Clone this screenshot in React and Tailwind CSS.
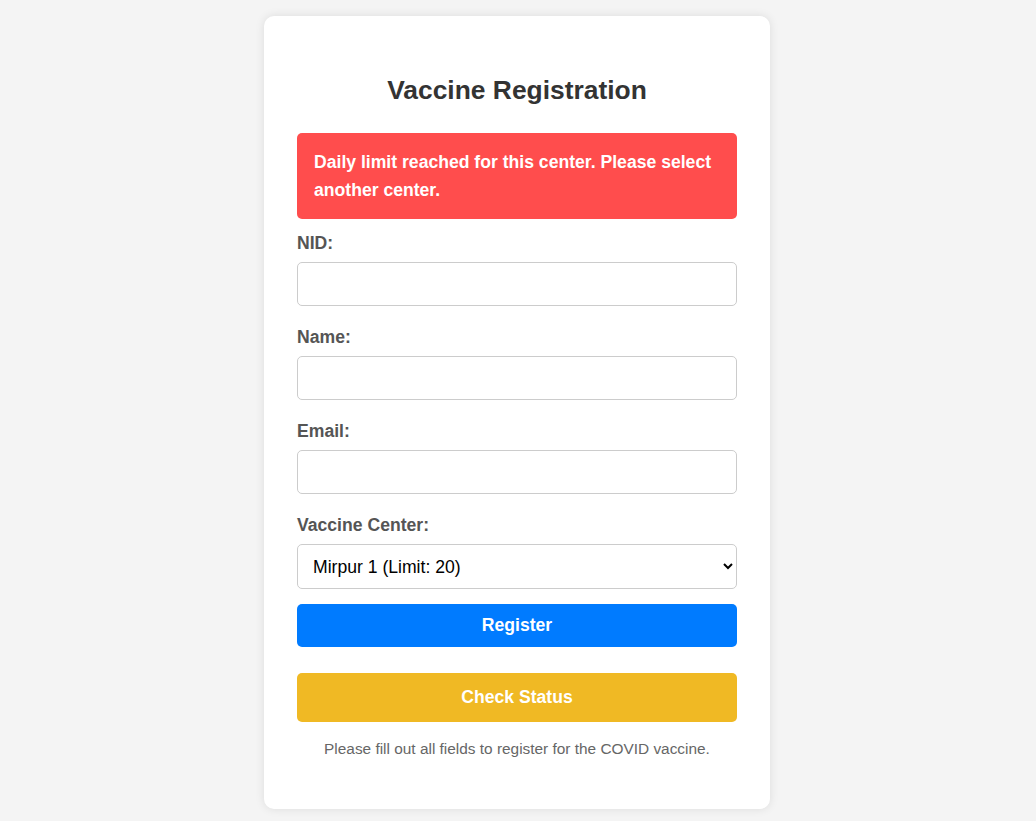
import { useState } from "react";

const centers = [
  { id: 1, name: "Mirpur 1", limit: 20 },
  { id: 2, name: "Mirpur 10", limit: 30 },
  { id: 3, name: "Dhanmondi", limit: 25 },
];

const Field = ({ label, name, type = "text", value, onChange }) => (
  <div>
    <label htmlFor={name} className="block text-[17.6px] leading-[20px] font-bold text-[#555] mb-[9px]">
      {label}
    </label>
    <input
      id={name}
      name={name}
      type={type}
      value={value}
      onChange={onChange}
      className="block w-full h-[44px] px-[11px] mb-[21px] border border-[#ccc] rounded-[5px] bg-white text-[17.6px] text-black focus:outline-none"
    />
  </div>
);

export default function App() {
  const [form, setForm] = useState({ nid: "", name: "", email: "", center: "1" });

  const handleChange = (e) => {
    const { name, value } = e.target;
    setForm((prev) => ({ ...prev, [name]: value }));
  };

  return (
    <div className="min-h-[821px] bg-[#f4f4f4] pt-4 font-['Liberation_Sans',Arial,sans-serif]">
      <div className="mx-auto -translate-x-px w-[506px] bg-white rounded-[10px] shadow-[0_0_10px_rgba(0,0,0,0.1)] px-[33px] pt-[59px] pb-[51px]">
        {/* Title */}
        <h2 className="text-center text-[26.4px] leading-[30px] font-bold text-[#333] mb-[28px]">
          Vaccine Registration
        </h2>

        {/* Error */}
        <div className="bg-[#ff4d4d] text-white font-bold text-[17.6px] leading-[28px] rounded-[5px] px-[17px] py-[15px] mb-[14px]">
          Daily limit reached for this center. Please select another center.
        </div>

        {/* Form */}
        <Field label="NID:" name="nid" value={form.nid} onChange={handleChange} />
        <Field label="Name:" name="name" value={form.name} onChange={handleChange} />
        <Field label="Email:" name="email" type="email" value={form.email} onChange={handleChange} />

        <div>
          <label htmlFor="center" className="block text-[17.6px] leading-[20px] font-bold text-[#555] mb-[9px]">
            Vaccine Center:
          </label>
          <select
            id="center"
            name="center"
            value={form.center}
            onChange={handleChange}
            className="block w-full h-[45px] pl-[11px] pr-2 border border-[#ccc] rounded-[5px] bg-white text-[17.6px] text-black focus:outline-none"
          >
            {centers.map((c) => (
              <option key={c.id} value={c.id}>
                {c.name} (Limit: {c.limit})
              </option>
            ))}
          </select>
        </div>

        <button className="mt-[15px] w-full h-[43px] rounded-[5px] bg-[#007bff] text-white font-bold text-[17.6px]">
          Register
        </button>

        <button className="mt-[26px] w-full h-[49px] rounded-[5px] bg-[#f0b924] text-white font-bold text-[17.6px]">
          Check Status
        </button>

        <p className="mt-[18px] text-center text-[15.4px] leading-[18px] text-[#666]">
          Please fill out all fields to register for the COVID vaccine.
        </p>
      </div>
    </div>
  );
}
